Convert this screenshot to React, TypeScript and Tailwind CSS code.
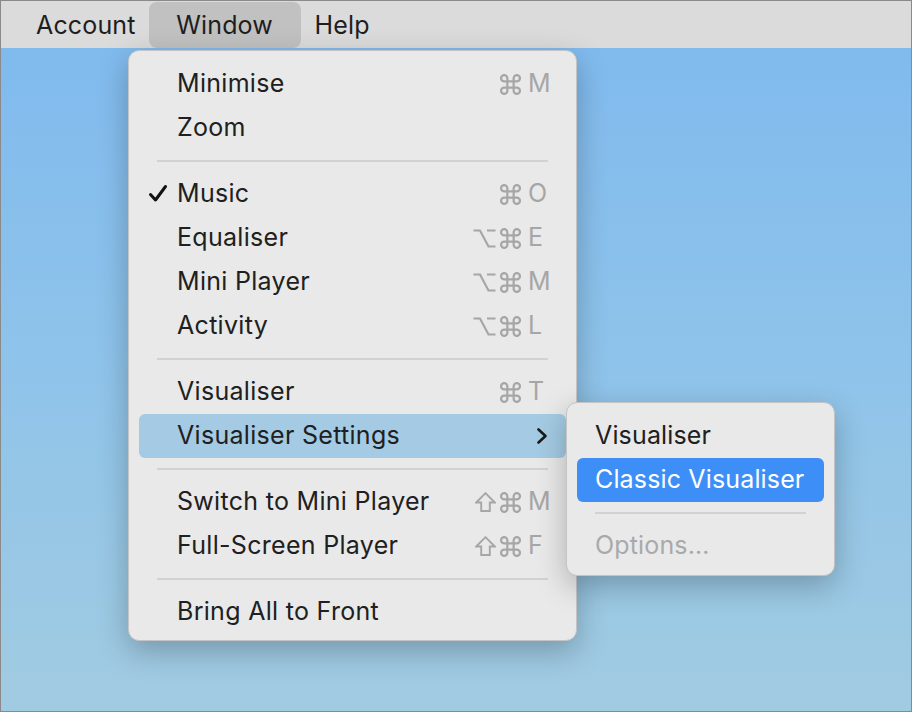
import React from "react";

type Mod = "cmd" | "opt" | "shift";

type Item =
  | { kind: "sep" }
  | {
      kind: "item";
      label: string;
      mods?: Mod[];
      keyName?: string;
      checked?: boolean;
      active?: boolean;
      submenu?: boolean;
    };

const windowMenu: Item[] = [
  { kind: "item", label: "Minimise", mods: ["cmd"], keyName: "M" },
  { kind: "item", label: "Zoom" },
  { kind: "sep" },
  { kind: "item", label: "Music", mods: ["cmd"], keyName: "O", checked: true },
  { kind: "item", label: "Equaliser", mods: ["opt", "cmd"], keyName: "E" },
  { kind: "item", label: "Mini Player", mods: ["opt", "cmd"], keyName: "M" },
  { kind: "item", label: "Activity", mods: ["opt", "cmd"], keyName: "L" },
  { kind: "sep" },
  { kind: "item", label: "Visualiser", mods: ["cmd"], keyName: "T" },
  { kind: "item", label: "Visualiser Settings", active: true, submenu: true },
  { kind: "sep" },
  { kind: "item", label: "Switch to Mini Player", mods: ["shift", "cmd"], keyName: "M" },
  { kind: "item", label: "Full-Screen Player", mods: ["shift", "cmd"], keyName: "F" },
  { kind: "sep" },
  { kind: "item", label: "Bring All to Front" },
];

const font = "font-['Inter','Noto_Sans',sans-serif]";
const grey = "#a6a6a6";

const CmdIcon = () => (
  <svg width="21" height="21" viewBox="2 2 20 20">
    <path
      d="M18 3a3 3 0 0 0-3 3v12a3 3 0 0 0 3 3 3 3 0 0 0 3-3 3 3 0 0 0-3-3H6a3 3 0 0 0-3 3 3 3 0 0 0 3 3 3 3 0 0 0 3-3V6a3 3 0 0 0-3-3 3 3 0 0 0-3 3 3 3 0 0 0 3 3h12a3 3 0 0 0 3-3 3 3 0 0 0-3-3z"
      fill="none"
      stroke={grey}
      strokeWidth="2.1"
    />
  </svg>
);

const OptIcon = () => (
  <svg width="23" height="19" viewBox="0 0 23 19">
    <path d="M0.5 1.5 H7 L15.5 17.5 H22.5 M14 1.5 H22.5" fill="none" stroke={grey} strokeWidth="2.2" />
  </svg>
);

const ShiftIcon = () => (
  <svg width="21" height="20" viewBox="0 0 21 20">
    <path d="M10.5 1.2 L19.8 10.5 H14.8 V19 H6.2 V10.5 H1.2 Z" fill="none" stroke={grey} strokeWidth="1.9" strokeLinejoin="miter" />
  </svg>
);

const modIcon = (m: Mod, i: number) =>
  m === "cmd" ? <CmdIcon key={i} /> : m === "opt" ? <OptIcon key={i} /> : <ShiftIcon key={i} />;

const Check = () => (
  <svg width="20" height="20" viewBox="0 0 20 20" className="absolute left-[9px] top-[12px]">
    <path d="M2.5 10.5 L7.5 16 L17.5 2.5" fill="none" stroke="#111" strokeWidth="3" strokeLinecap="round" strokeLinejoin="round" />
  </svg>
);

const Chevron = () => (
  <svg width="14" height="20" viewBox="0 0 14 20">
    <path d="M3.5 3.5 L10.5 10 L3.5 16.5" fill="none" stroke="#1a1a1a" strokeWidth="2.6" strokeLinecap="round" strokeLinejoin="round" />
  </svg>
);

const Separator = () => (
  <div className="h-[22px] flex items-center px-[28px]">
    <div className="h-[2px] w-full bg-[#d2d2d2]" />
  </div>
);

function MenuRow({ item }: { item: Extract<Item, { kind: "item" }> }) {
  return (
    <div
      className={
        "relative mx-[10px] h-[44px] rounded-[6px] flex items-center pl-[38px] pr-[17px] " +
        (item.active ? "bg-[#a4cbe3]" : "")
      }
    >
      {item.checked && <Check />}
      <span className="text-[25px] text-[#202020] tracking-[0.3px]">{item.label}</span>
      <div className="ml-auto flex items-center text-[25px] text-[#a6a6a6]">
        {item.mods && <div className="flex items-center gap-[4px] mr-[7px]">{item.mods.map(modIcon)}</div>}
        {item.keyName && <span className="w-[21px]">{item.keyName}</span>}
        {item.submenu && <Chevron />}
      </div>
    </div>
  );
}

export default function App() {
  return (
    <div className={"relative w-[912px] h-[712px] overflow-hidden border border-[#8a8a8a] bg-gradient-to-b from-[#7eb9ee] via-[#8ec3ea] to-[#a1cbe1] " + font}>
      <div className="h-[47px] bg-[#dbdbdb] flex items-center text-[25px] text-[#1e1e1e] tracking-[0.15px]">
        <span className="ml-[35px] pt-[2px]">Account</span>
        <span className="ml-[13px] h-[46px] w-[152px] rounded-[8px] bg-[#c1c1c1] flex items-center justify-center pt-[2px]">Window</span>
        <span className="ml-[14px] pt-[2px]">Help</span>
      </div>

      <div className="absolute left-[127px] top-[49px] w-[449px] rounded-[11px] border border-[#c4c4c4] bg-[#e9e9e9] pt-[11px] pb-[6px] shadow-[0_10px_30px_rgba(0,0,0,0.25)]">
        {windowMenu.map((it, i) =>
          it.kind === "sep" ? <Separator key={i} /> : <MenuRow key={i} item={it} />
        )}
      </div>

      <div className="absolute left-[565px] top-[401px] w-[269px] rounded-[11px] border border-[#c4c4c4] bg-[#e9e9e9] pt-[11px] pb-[7px] shadow-[0_10px_30px_rgba(0,0,0,0.25)] text-[25px] tracking-[0.15px]">
        <div className="mx-[10px] h-[44px] flex items-center pl-[18px] text-[#202020]">Visualiser</div>
        <div className="mx-[10px] h-[44px] rounded-[6px] bg-[#3d8ff7] flex items-center pl-[18px] text-white">
          Classic Visualiser
        </div>
        <Separator />
        <div className="mx-[10px] h-[44px] flex items-center pl-[18px] text-[#a9a9a9]">Options…</div>
      </div>
    </div>
  );
}
